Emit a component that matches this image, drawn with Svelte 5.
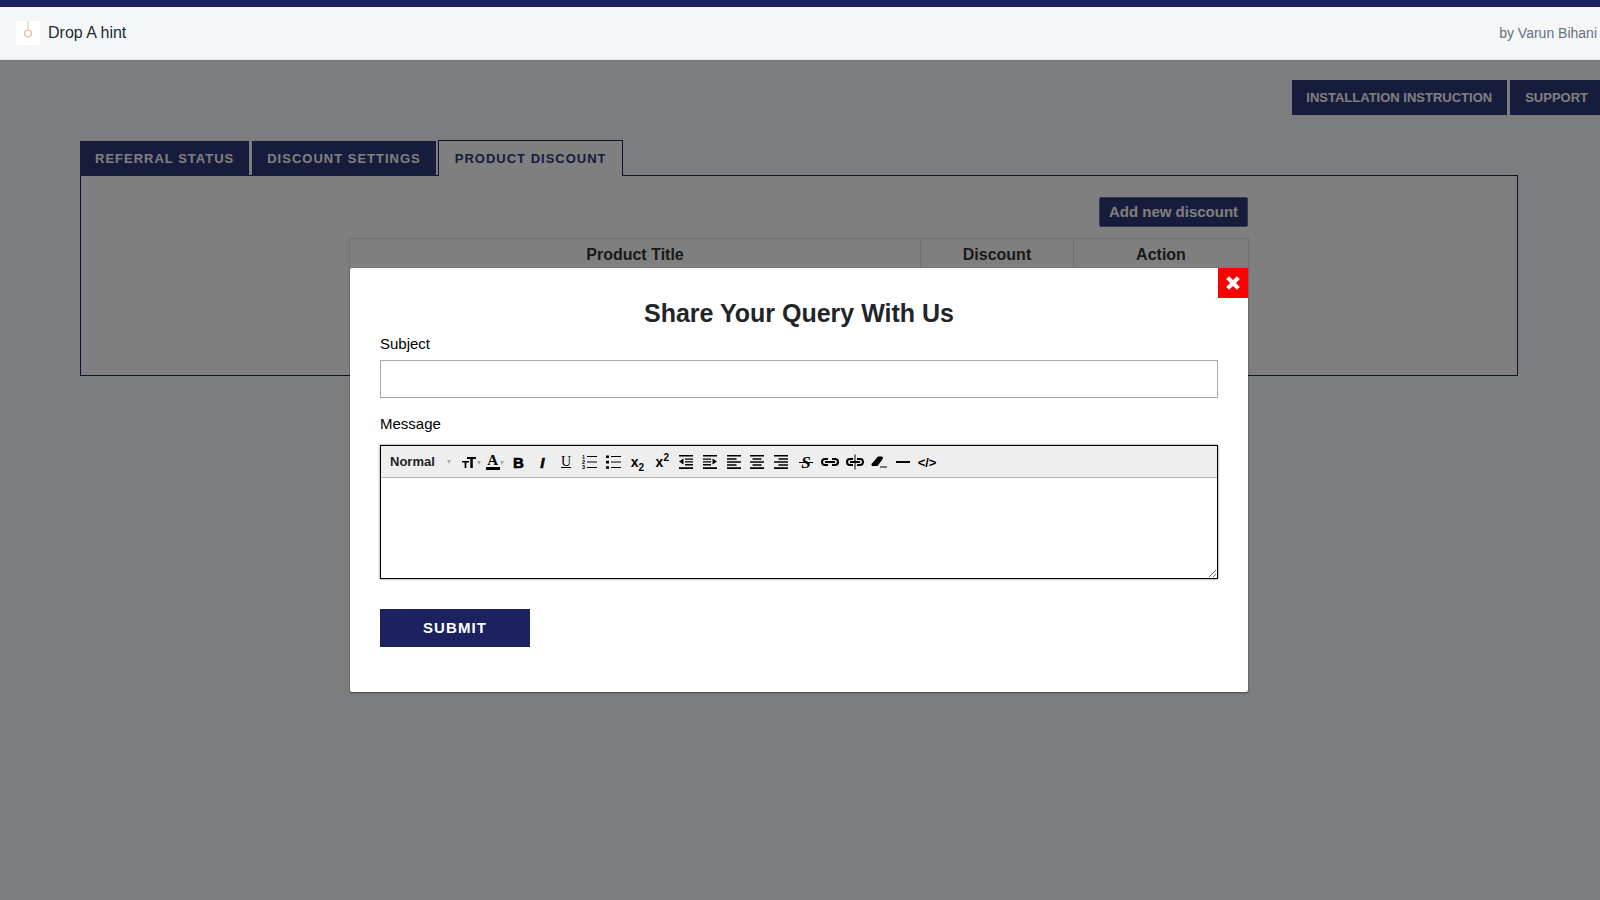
<script>
  let subject = "";

  const tabs = [
    { label: "REFERRAL STATUS", active: false },
    { label: "DISCOUNT SETTINGS", active: false },
    { label: "PRODUCT DISCOUNT", active: true },
  ];

  // toolbar icons drawn in an 18x18 box
  const listLines = "M7 3h10v1H7z M7 8.5h10v1H7z M7 14h10v1H7z";
  const blocks = [
    { d: "M2 2h14v1.6H2z M8 5.4h8v1.4H8z M8 8.2h8v1.4H8z M8 11h8v1.4H8z M2 14.2h14v1.8H2z M6.5 5.6v6L2 8.6z" },
    { d: "M2 2h14v1.6H2z M2 5.4h8v1.4H2z M2 8.2h8v1.4H2z M2 11h8v1.4H2z M2 14.2h14v1.8H2z M11.5 5.6v6L16 8.6z" },
    { d: "M2 2h14v1.6H2z M2 5.2h9.5v1.5H2z M2 8.2h14v1.5H2z M2 11.2h9.5v1.5H2z M2 14.2h14v1.8H2z" },
    { d: "M2 2h14v1.6H2z M4.5 5.2h9v1.5h-9z M2 8.2h14v1.5H2z M4.5 11.2h9v1.5h-9z M2 14.2h14v1.8H2z" },
    { d: "M2 2h14v1.6H2z M6.5 5.2H16v1.5H6.5z M2 8.2h14v1.5H2z M6.5 11.2H16v1.5H6.5z M2 14.2h14v1.8H2z" },
  ];
  const chain = "M8 6H5a3 3 0 0 0 0 6h3 M12 6h3a3 3 0 0 1 0 6h-3 M5 9h10";
</script>

<div class="page">
  <header class="topbar">
    <div class="brand">
      <span class="logo">
        <svg viewBox="0 0 24 24" width="24" height="24">
          <path d="M12 0v9" stroke="#e3bfa3" stroke-width="1" fill="none" />
          <circle cx="12" cy="12.5" r="3.4" stroke="#e3bfa3" stroke-width="1.4" fill="none" />
        </svg>
      </span>
      <span class="name">Drop A hint</span>
    </div>
    <span class="author">by Varun Bihani</span>
  </header>

  <main class="content">
    <div class="actions">
      <button class="action">INSTALLATION INSTRUCTION</button>
      <button class="action">SUPPORT</button>
    </div>

    <div class="tabs">
      {#each tabs as tab}
        <button class="tab" class:active={tab.active}>{tab.label}</button>
      {/each}
    </div>

    <section class="panel">
      <div class="panel-inner">
        <div class="add-row">
          <button class="add">Add new discount</button>
        </div>
        <table>
          <thead>
            <tr>
              <th class="c1">Product Title</th>
              <th class="c2">Discount</th>
              <th class="c3">Action</th>
            </tr>
          </thead>
        </table>
      </div>
    </section>
  </main>

  <div class="overlay">
    <div class="modal">
      <button class="close" aria-label="Close">
        <svg viewBox="0 0 14 14" width="16" height="16">
          <path d="M1 3.6 3.6 1 7 4.4 10.4 1 13 3.6 9.6 7 13 10.4 10.4 13 7 9.6 3.6 13 1 10.4 4.4 7z" fill="#fff" />
        </svg>
      </button>
      <h2>Share Your Query With Us</h2>
      <label for="subject">Subject</label>
      <input id="subject" type="text" bind:value={subject} />
      <label class="msg-label" for="message">Message</label>
      <div class="editor">
        <div class="toolbar">
          <span class="format">Normal</span>
          <span class="caret first"></span>

          <span class="tool size">
            <svg viewBox="0 0 16 18" width="16" height="18">
              <path d="M1 8h7v1.4H5.4V15H3.6V9.4H1z M6 4h9v2h-3.2v9H9.3V6H6z" />
            </svg>
            <span class="caret"></span>
          </span>
          <span class="tool size">
            <span class="color">A</span>
            <span class="caret"></span>
          </span>

          <span class="tool letter bold">B</span>
          <span class="tool letter italic">I</span>
          <span class="tool letter under">U</span>

          <span class="tool pull">
            <svg viewBox="0 0 18 18" width="18" height="18">
              <path d={listLines} />
              <text x="2" y="6" class="num">1</text>
              <text x="2" y="11.2" class="num">2</text>
              <text x="2" y="16.4" class="num">3</text>
            </svg>
          </span>
          <span class="tool">
            <svg viewBox="0 0 18 18" width="18" height="18">
              <path d={listLines} />
              <path d="M2 2.4h3v2.6H2z M2 7.8h3v2.6H2z M2 13.2h3v2.6H2z" />
            </svg>
          </span>

          <span class="tool script nudge"><span>x<sub>2</sub></span></span>
          <span class="tool script nudge"><span>x<sup>2</sup></span></span>

          {#each blocks as icon}
            <span class="tool">
              <svg viewBox="0 0 18 18" width="18" height="18"><path d={icon.d} /></svg>
            </span>
          {/each}

          <span class="tool letter strike nudge">
            <span class="s-wrap">S<span class="s-bar"></span></span>
          </span>
          <span class="tool">
            <svg viewBox="0 0 20 18" width="20" height="18">
              <path class="line" d={chain} />
            </svg>
          </span>
          <span class="tool nudge">
            <svg viewBox="0 0 20 18" width="20" height="18">
              <path class="line" d={chain} />
              <path d="M9.5 1.5h1v15h-1z" />
            </svg>
          </span>
          <span class="tool nudge">
            <svg viewBox="0 0 18 18" width="18" height="18">
              <path d="M8 3.5h3.5a1.6 1.6 0 0 1 1.2 2.6L7.5 13H3.6A1.6 1.6 0 0 1 2.4 10z M10 13.6h7v1h-7z" />
            </svg>
          </span>
          <span class="tool">
            <svg viewBox="0 0 18 18" width="18" height="18"><path d="M2 8h14v2H2z" /></svg>
          </span>
          <span class="tool code">&lt;/&gt;</span>
        </div>
        <textarea id="message"></textarea>
      </div>
      <button class="submit">SUBMIT</button>
    </div>
  </div>
</div>

<style>
  :global(body) {
    background: #f8fafd;
    font-family: "Liberation Sans", Arial, sans-serif;
    overflow: hidden;
  }

  .page {
    height: 900px;
    border-top: 7px solid #1c2260;
    box-sizing: border-box;
    position: relative;
  }

  .topbar {
    height: 53px;
    box-sizing: border-box;
    background: #f4f6f8;
    border-bottom: 1px solid #dfe3e8;
    display: flex;
    align-items: center;
    justify-content: space-between;
    padding: 0 3px 0 16px;
  }

  .brand {
    display: flex;
    align-items: center;
    gap: 8px;
  }

  .logo {
    width: 24px;
    height: 24px;
    background: #fff;
    display: block;
  }

  .logo svg {
    display: block;
  }

  .name {
    font-size: 16px;
    color: #212b36;
  }

  .author {
    font-size: 14px;
    color: #637381;
  }

  .content {
    padding: 20px 0 0 80px;
  }

  .actions {
    display: flex;
    justify-content: flex-end;
    gap: 3px;
    margin-bottom: 26px;
  }

  button {
    font-family: inherit;
    border: none;
    cursor: pointer;
  }

  .action {
    height: 35px;
    padding: 0 15px 0 14px;
    background: #303878;
    color: #fff;
    font-size: 13px;
    font-weight: 700;
  }

  .action:last-child {
    padding: 0 12px 0 15px;
  }

  .tabs {
    display: flex;
    align-items: flex-end;
    gap: 3px;
    height: 35px;
    margin-bottom: -1px;
  }

  .tab {
    height: 35px;
    padding: 0 15px;
    background: #303878;
    color: #fff;
    font-size: 13px;
    font-weight: 700;
    letter-spacing: 1px;
  }

  .tab.active {
    height: 36px;
    margin-left: -1px;
    padding: 0 15px 0 16px;
    background: #fff;
    color: #303878;
    border: 1px solid #1c2260;
    border-bottom: none;
    position: relative;
  }

  .panel {
    width: 1438px;
    height: 201px;
    box-sizing: border-box;
    border: 1px solid #1c2260;
    background: #fff;
  }

  .panel-inner {
    width: 900px;
    margin-left: 268px;
    padding-top: 21px;
  }

  .add-row {
    display: flex;
    justify-content: flex-end;
    margin: 0 1px 11px 0;
  }

  .add {
    width: 149px;
    height: 30px;
    border: 1px solid #6b6f8a;
    border-radius: 2px;
    background: #303878;
    color: #fff;
    font-size: 15px;
    font-weight: 700;
    padding: 0 0 1px;
  }

  table {
    width: 100%;
    border-collapse: collapse;
    table-layout: fixed;
  }

  th {
    border: 1px solid #dee2e6;
    height: 31px;
    padding: 0;
    font-size: 16px;
    color: #333;
    vertical-align: middle;
  }

  .c2 {
    width: 152px;
  }

  .c3 {
    width: 174px;
  }

  .overlay {
    position: absolute;
    top: 53px;
    left: 0;
    right: 0;
    bottom: 0;
    background: rgba(0, 0, 0, 0.5);
    padding: 208px 0 0 350px;
    box-sizing: border-box;
  }

  .modal {
    position: relative;
    width: 898px;
    height: 424px;
    box-sizing: border-box;
    background: #fff;
    border-radius: 2px;
    box-shadow: 0 1px 2px rgba(0, 0, 0, 0.45), 0 0 1px rgba(0, 0, 0, 0.3);
    padding: 30px 30px 0;
    color: #000;
  }

  .close {
    position: absolute;
    top: 0;
    right: 0;
    width: 30px;
    height: 30px;
    background: #ff0000;
    padding: 0;
    display: flex;
    align-items: center;
    justify-content: center;
  }

  h2 {
    margin: 0 0 5px;
    font-size: 25px;
    line-height: 31px;
    font-weight: 700;
    text-align: center;
    color: #212529;
  }

  label {
    display: block;
    font-size: 15px;
    line-height: 20px;
    margin-bottom: 6px;
  }

  .msg-label {
    margin: 16px 0 11px;
  }

  input {
    display: block;
    width: 100%;
    height: 38px;
    box-sizing: border-box;
    border: 1px solid #a9a9a9;
    background: #fff;
    outline: none;
  }

  .editor {
    height: 134px;
    box-sizing: border-box;
    border: 1px solid #000;
    box-shadow: 0 0 2px rgba(0, 0, 0, 0.6);
    display: flex;
    flex-direction: column;
  }

  .toolbar {
    height: 32px;
    box-sizing: border-box;
    flex: none;
    background: #eee;
    border-bottom: 1px solid #b5b5b5;
    display: flex;
    align-items: center;
    padding-left: 9px;
  }

  .format {
    font-size: 13px;
    font-weight: 700;
    color: #222;
    width: 57px;
  }

  .caret {
    display: inline-block;
    flex: none;
    width: 0;
    height: 0;
    border-left: 2.5px solid transparent;
    border-right: 2.5px solid transparent;
    border-top: 4px solid #aaa;
    margin-top: 1px;
  }

  .caret.first {
    margin-right: 8px;
  }

  .tool {
    width: 23.8px;
    height: 24px;
    flex: none;
    display: flex;
    align-items: center;
    justify-content: center;
    color: #000;
    font-size: 14px;
    padding-top: 1px;
    box-sizing: border-box;
  }

  .tool svg {
    display: block;
    fill: #000;
    flex: none;
  }

  .pull {
    margin-left: -1px;
  }

  .nudge {
    margin-left: 1px;
  }

  .color {
    font-family: "Liberation Serif", serif;
    font-size: 15px;
    font-weight: 700;
    line-height: 13px;
    border-bottom: 3px solid #000;
    width: 14px;
    text-align: center;
  }

  .letter {
    line-height: 1;
  }

  .bold {
    font-weight: 700;
    font-size: 15px;
    -webkit-text-stroke: 0.6px #000;
  }

  .italic {
    font-style: italic;
    font-weight: 700;
    font-size: 15px;
    -webkit-text-stroke: 0.6px #000;
  }

  .under {
    font-family: "Liberation Serif", serif;
    text-decoration: underline;
    font-size: 14px;
  }

  .script {
    font-size: 14px;
    font-weight: 700;
    line-height: 1;
  }

  .script sub,
  .script sup {
    font-size: 10px;
    line-height: 0;
  }

  .strike {
    font-family: "Liberation Serif", serif;
    font-style: italic;
    font-weight: 700;
    font-size: 17px;
  }

  .s-wrap {
    position: relative;
    display: block;
  }

  .s-bar {
    position: absolute;
    left: -2px;
    right: -2px;
    top: 8px;
    height: 1.5px;
    background: #000;
  }

  .code {
    font-size: 13px;
    font-weight: 700;
  }

  .num {
    font-size: 5.5px;
    font-weight: 700;
    font-family: "Liberation Sans", sans-serif;
  }

  .line {
    fill: none;
    stroke: #000;
    stroke-width: 2;
  }

  textarea {
    flex: 1;
    display: block;
    border: none;
    outline: none;
    resize: vertical;
    background: #fff;
  }

  .submit {
    display: block;
    margin-top: 30px;
    width: 150px;
    height: 38px;
    background: #1c2260;
    color: #fff;
    font-size: 15px;
    font-weight: 700;
    letter-spacing: 1.1px;
    padding: 0 0 2px;
  }
</style>
